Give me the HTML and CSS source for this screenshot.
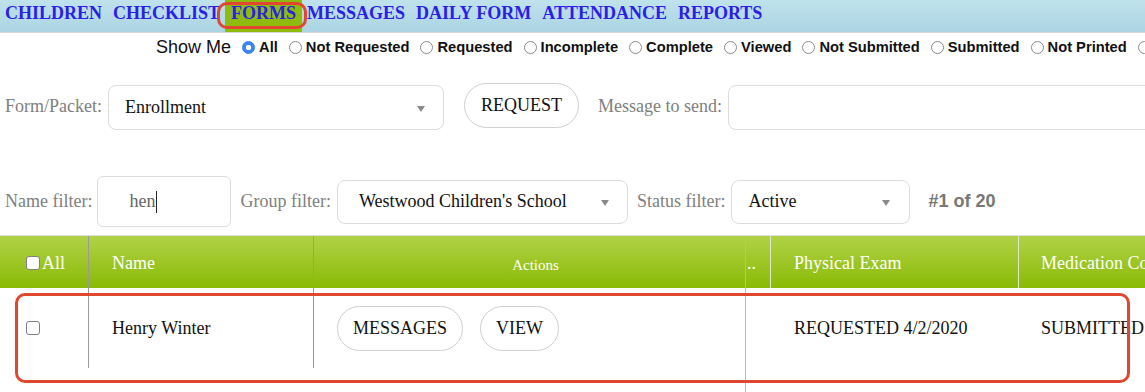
FILE: index.html
```html
<!DOCTYPE html>
<html>
<head>
<meta charset="utf-8">
<link rel="stylesheet" href="styles.css">
</head>
<body>
<nav class="topnav">
  <a class="nav-item">CHILDREN</a>
  <a class="nav-item">CHECKLIST</a>
  <a class="nav-item active">FORMS</a>
  <a class="nav-item">MESSAGES</a>
  <a class="nav-item">DAILY FORM</a>
  <a class="nav-item">ATTENDANCE</a>
  <a class="nav-item">REPORTS</a>
</nav>

<div class="showme">
  <span class="showme-label">Show Me</span>
  <label class="opt"><input type="radio" name="s" checked>All</label>
  <label class="opt"><input type="radio" name="s">Not Requested</label>
  <label class="opt"><input type="radio" name="s">Requested</label>
  <label class="opt"><input type="radio" name="s">Incomplete</label>
  <label class="opt"><input type="radio" name="s">Complete</label>
  <label class="opt"><input type="radio" name="s">Viewed</label>
  <label class="opt"><input type="radio" name="s">Not Submitted</label>
  <label class="opt"><input type="radio" name="s">Submitted</label>
  <label class="opt"><input type="radio" name="s">Not Printed</label>
  <label class="opt"><input type="radio" name="s">Printed</label>
</div>

<div class="form-row">
  <span class="lbl">Form/Packet:</span>
  <div class="select select-form">Enrollment<span class="arrow"></span></div>
  <button class="pill pill-request">REQUEST</button>
  <span class="lbl lbl-msg">Message to send:</span>
  <div class="msg-input"></div>
</div>

<div class="filter-row">
  <span class="lbl">Name filter:</span>
  <div class="name-input">hen<span class="caret"></span></div>
  <span class="lbl lbl-group">Group filter:</span>
  <div class="select select-group">Westwood Children's School<span class="arrow"></span></div>
  <span class="lbl lbl-status">Status filter:</span>
  <div class="select select-status">Active<span class="arrow"></span></div>
  <span class="count">#1 of 20</span>
</div>

<div class="table">
  <div class="pane pane-left">
    <div class="row head">
      <div class="cell c-check"><span class="cbox"></span>All</div>
      <div class="cell c-name">Name</div>
      <div class="cell c-actions">Actions</div>
    </div>
    <div class="row body">
      <div class="cell c-check"><span class="cbox"></span></div>
      <div class="cell c-name">Henry Winter</div>
      <div class="cell c-actions"><button class="pill">MESSAGES</button><button class="pill">VIEW</button></div>
    </div>
  </div>
  <div class="pane pane-right">
    <div class="row head">
      <div class="cell c-dots">..</div>
      <div class="cell c-form">Physical Exam</div>
      <div class="cell c-form2">Medication Consent</div>
    </div>
    <div class="row body">
      <div class="cell c-dots"></div>
      <div class="cell c-form">REQUESTED 4/2/2020</div>
      <div class="cell c-form2">SUBMITTED</div>
    </div>
  </div>
  <div class="highlight-row"></div>
</div>
</body>
</html>
```

FILE: styles.css
```css
html, body {
  margin: 0;
  padding: 0;
  background: #fff;
  overflow: hidden;
  width: 1145px;
  height: 392px;
  font-family: "Liberation Serif", "Times New Roman", serif;
}

/* top navigation */
.topnav {
  display: flex;
  height: 32px;
  background: linear-gradient(#bfe2ec, #abd4e2);
  border-bottom: 1px solid #d8d8d8;
  padding-left: 0;
  white-space: nowrap;
}
.nav-item {
  display: block;
  height: 32px;
  line-height: 27px;
  padding: 0 6px;
  font-weight: bold;
  font-size: 18px;
  color: #2a1ee8;
  margin-left: -1px;
}
.nav-item.active {
  background: #8fbc0c;
  position: relative;
}
.nav-item.active::after {
  content: "";
  position: absolute;
  left: -8px;
  right: -5px;
  top: 2px;
  bottom: 3px;
  border: 3px solid #e0472f;
  border-radius: 10px;
}

/* show me row */
.showme {
  display: flex;
  align-items: center;
  height: 28px;
  padding-left: 156px;
  white-space: nowrap;
  font-family: "Liberation Sans", Arial, sans-serif;
  color: #111;
}
.showme-label {
  font-size: 18px;
  margin-right: 11px;
}
.opt {
  display: flex;
  align-items: center;
  font-weight: bold;
  font-size: 14.7px;
  margin-right: 11px;
  flex-shrink: 0;
}
.opt input {
  appearance: none;
  -webkit-appearance: none;
  width: 13px;
  height: 13px;
  margin: 0 4px 0 0;
  border: 1px solid #8a8a8a;
  border-radius: 50%;
  background: #fff;
  box-sizing: border-box;
}
.opt input:checked {
  border-color: #2f7cf0;
  background: radial-gradient(circle, #fff 0 2.5px, #3a86f5 3px);
}

/* labels */
.lbl {
  font-size: 18px;
  color: #808080;
  white-space: nowrap;
}

/* form row */
.form-row {
  display: flex;
  align-items: flex-start;
  margin-top: 22px;
  padding-left: 5px;
  height: 47px;
}
.form-row .lbl {
  align-self: center;
  margin-right: 6px;
}
.form-row .lbl-msg { margin-right: 6px; }

.select {
  position: relative;
  box-sizing: border-box;
  height: 45px;
  border: 1px solid #dcdcdc;
  border-radius: 8px;
  display: flex;
  align-items: center;
  padding-left: 16px;
  font-size: 18px;
  color: #111;
  white-space: nowrap;
}
.select .arrow {
  position: absolute;
  right: 18px;
  top: 20px;
  width: 0;
  height: 0;
  border-left: 4px solid transparent;
  border-right: 4px solid transparent;
  border-top: 6px solid #8a8a8a;
}
.select-form {
  width: 336px;
  margin-top: 2px;
  margin-right: 20px;
}
.pill {
  box-sizing: border-box;
  height: 45px;
  padding: 0 15px;
  border: 1px solid #cfcfcf;
  border-radius: 23px;
  background: #fff;
  font-family: "Liberation Serif", "Times New Roman", serif;
  font-size: 18px;
  color: #111;
}
.pill-request {
  width: 115px;
  margin-right: 19px;
}
.msg-input {
  box-sizing: border-box;
  flex: 1;
  height: 45px;
  margin-top: 2px;
  margin-right: -20px;
  border: 1px solid #dcdcdc;
  border-radius: 8px;
}

/* filter row */
.filter-row {
  display: flex;
  align-items: center;
  height: 51px;
  margin-top: 46px;
  padding-left: 5px;
}
.name-input {
  box-sizing: border-box;
  width: 134px;
  height: 51px;
  margin-left: 5px;
  margin-right: 9px;
  border: 1px solid #dcdcdc;
  border-radius: 6px;
  display: flex;
  align-items: center;
  padding-left: 31px;
  font-size: 18px;
  color: #666;
}
.caret {
  display: inline-block;
  width: 1px;
  height: 22px;
  background: #222;
  margin-left: 1px;
}
.select-group {
  width: 291px;
  margin-left: 6px;
  margin-right: 9px;
  padding-left: 21px;
  height: 44px;
}
.select-group .arrow { right: 18px; top: 19px; }
.select-status {
  width: 179px;
  margin-left: 6px;
  height: 44px;
}
.select-status .arrow { right: 19px; top: 19px; }
.count {
  margin-left: 18px;
  font-family: "Liberation Sans", Arial, sans-serif;
  font-weight: bold;
  font-size: 18px;
  color: #777;
}

/* table */
.table {
  position: relative;
  display: flex;
  margin-top: 8px;
  border-top: 1px solid #dedede;
  height: 160px;
}
.pane { display: flex; flex-direction: column; }
.pane-left { width: 745px; flex-shrink: 0; }
.pane-right {
  flex: 1;
  border-left: 1px solid #b8b8b8;
  min-width: 0;
}
.row { display: flex; }
.row.head {
  height: 52px;
  background: linear-gradient(#b0d247, #8aba05);
  color: #fff;
}
.row.body {
  height: 80px;
  color: #111;
}
.cell {
  box-sizing: border-box;
  display: flex;
  align-items: center;
  font-size: 18px;
  white-space: nowrap;
  overflow: hidden;
}
.head .cell { padding-top: 2px; }
.c-check {
  width: 89px;
  padding-left: 26px;
  border-right: 1px solid #9a9a9a;
}
.c-name {
  width: 225px;
  padding-left: 23px;
  border-right: 1px solid #9a9a9a;
}
.c-actions {
  width: 431px;
  padding-left: 23px;
  gap: 17px;
}
.head .c-actions {
  justify-content: center;
  font-size: 15px;
  padding-left: 12px;
  padding-top: 6px;
}
.cbox {
  box-sizing: border-box;
  width: 14px;
  height: 14px;
  background: #fff;
  border: 1px solid #808080;
  border-radius: 3px;
  margin-right: 2px;
}
.c-dots {
  width: 25px;
  padding-left: 1px;
  border-right: 1px solid #dfe9c8;
}
.body .c-dots { border-right: none; }
.c-form {
  width: 248px;
  padding-left: 23px;
  border-right: 1px solid #dfe9c8;
}
.body .c-form { border-right: none; }
.c-form2 {
  flex: 1;
  padding-left: 22px;
}

.highlight-row {
  position: absolute;
  left: 15px;
  top: 57px;
  width: 1115px;
  height: 90px;
  box-sizing: border-box;
  border: 3px solid #e0472f;
  border-radius: 10px;
  pointer-events: none;
}
```
